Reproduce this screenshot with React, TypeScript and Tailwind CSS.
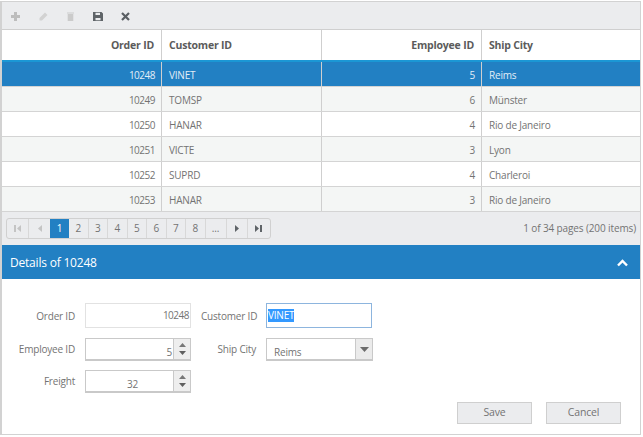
const rows = [
  ["10248", "VINET", "5", "Reims"],
  ["10249", "TOMSP", "6", "Münster"],
  ["10250", "HANAR", "4", "Rio de Janeiro"],
  ["10251", "VICTE", "3", "Lyon"],
  ["10252", "SUPRD", "4", "Charleroi"],
  ["10253", "HANAR", "3", "Rio de Janeiro"],
];

function Spinner() {
  return (
    <div className="w-[17px] shrink-0 bg-[#eeeeee] border-l border-[#c9c9c9] flex flex-col items-center justify-between pt-[4px] pb-[4px]">
      <svg width="7" height="4" viewBox="0 0 7 4"><path d="M3.5 0L7 4H0z" fill="#777777" /></svg>
      <svg width="7" height="4" viewBox="0 0 7 4"><path d="M3.5 4L7 0H0z" fill="#5f5f5f" /></svg>
    </div>
  );
}

const First = ({ c }: { c: string }) => (
  <svg width="7" height="7" viewBox="0 0 7 7"><path d="M0 0h2v7H0zM7 0v7L3 3.5z" fill={c} /></svg>
);
const Last = ({ c }: { c: string }) => (
  <svg width="7" height="7" viewBox="0 0 7 7"><path d="M7 0H5v7h2zM0 0v7l4-3.5z" fill={c} /></svg>
);
const Prev = ({ c }: { c: string }) => (
  <svg width="4" height="7" viewBox="0 0 4 7"><path d="M4 0v7L0 3.5z" fill={c} /></svg>
);
const Next = ({ c }: { c: string }) => (
  <svg width="4" height="7" viewBox="0 0 4 7"><path d="M0 0v7l4-3.5z" fill={c} /></svg>
);

function ToolIcon({ children }: { children: React.ReactNode }) {
  return <div className="w-[27.5px] h-[10px] flex items-center justify-center">{children}</div>;
}

export default function App() {
  return (
    <div className="w-[643px] h-[437px] bg-white pt-px text-[10px] text-[#737373] tracking-[-0.2px]" style={{ fontFamily: '"Open Sans", "Noto Sans", sans-serif' }}>
      <div className="w-[641px] h-[434px] border border-[#d2d2d2] border-l-2 flex flex-col overflow-hidden">
        <div className="h-[28px] shrink-0 bg-[#ebecee] border-b border-[#cfcfcf] flex items-center pt-[2px]">
          <ToolIcon>
            <svg width="9" height="9" viewBox="0 0 9 9"><path d="M3 0h3v3h3v3H6v3H3V6H0V3h3z" fill="#bdbdbd" /></svg>
          </ToolIcon>
          <ToolIcon>
            <svg width="9" height="9" viewBox="0 0 9 9"><path d="M6 0.5l2.5 2.5L3 8.5H0.5V6z" fill="#d2d2d2" /></svg>
          </ToolIcon>
          <ToolIcon>
            <svg width="7" height="9" viewBox="0 0 7 9"><path d="M0 0.5h7v1H0zM0.7 2h5.6v7H0.7z" fill="#cbcbcb" /></svg>
          </ToolIcon>
          <ToolIcon>
            <svg width="10" height="9" viewBox="0 0 10 9"><path d="M0 0h8.5L10 1.5V9H0zM2.5 0.8v2.2h4.5V0.8zM2.5 6v2.2h5V6z" fill="#5f6468" fillRule="evenodd" /></svg>
          </ToolIcon>
          <ToolIcon>
            <svg width="9" height="9" viewBox="0 0 9 9"><path d="M1 1l7 7M8 1L1 8" stroke="#5a5f63" strokeWidth="2.2" /></svg>
          </ToolIcon>
        </div>
        <div className="h-[30px] shrink-0 grid grid-cols-[160px_160px_160px_1fr] font-bold text-[#5b5b5b] text-[10.5px]">
          <div className="flex items-center justify-end pt-px pr-[7px] border-r border-[#cfcfcf]">Order ID</div>
          <div className="flex items-center pt-px pl-[7px] border-r border-[#cfcfcf]">Customer ID</div>
          <div className="flex items-center justify-end pt-px pr-[7px] border-r border-[#cfcfcf]">Employee ID</div>
          <div className="flex items-center pt-px pl-[7px]">Ship City</div>
        </div>
        {rows.map((r, i) => (
          <div
            key={r[0]}
            className={
              "shrink-0 grid grid-cols-[160px_160px_160px_1fr] border-b border-[#d4d4d4] " +
              (i === 0
                ? "h-[27px] bg-[#2280c3] text-[#e3eef7] border-t-2 border-t-[#1b97d5]"
                : i % 2 === 1
                ? "h-[25px] bg-[#f4f6f5]"
                : "h-[25px] bg-white")
            }
          >
            <div className="flex items-center justify-end pt-[2px] pr-[6px] border-r border-[#cfcfcf] tracking-[-0.5px]">{r[0]}</div>
            <div className="flex items-center pt-[2px] pl-[7px] border-r border-[#cfcfcf]">{r[1]}</div>
            <div className="flex items-center justify-end pt-[2px] pr-[6px] border-r border-[#cfcfcf]">{r[2]}</div>
            <div className="flex items-center pt-[2px] pl-[7px]">{r[3]}</div>
          </div>
        ))}
        <div className="h-[33px] shrink-0 bg-[#ebecee] flex items-center justify-between pl-[4px] pr-[4px]">
          <div className="flex h-[21px] border border-[#d0d0d0] rounded-[3px] items-stretch overflow-hidden">
            <div className="w-[22px] flex items-center justify-center border-r border-[#d8d8d8]"><First c="#c4c4c4" /></div>
            <div className="w-[21px] flex items-center justify-center"><Prev c="#c4c4c4" /></div>
            <div className="w-[19px] flex items-center justify-center bg-[#2280c3] text-white">1</div>
            {["2", "3", "4", "5", "6", "7", "8", "..."].map((p) => (
              <div key={p} className={"flex items-center justify-center border-r border-[#d8d8d8] " + (p === "..." ? "w-[21px]" : "w-[19.5px]")}>{p}</div>
            ))}
            <div className="w-[21px] flex items-center justify-center border-r border-[#d8d8d8]"><Next c="#5f6468" /></div>
            <div className="w-[22px] flex items-center justify-center"><Last c="#5f6468" /></div>
          </div>
          <div className="tracking-[-0.12px]">1 of 34 pages (200 items)</div>
        </div>
        <div className="h-[34px] shrink-0 bg-[#2280c3] text-white text-[12px] flex items-center justify-between pt-px pl-[8px] pr-[12px]">
          <span>Details of 10248</span>
          <svg width="11" height="8" viewBox="0 0 11 8"><path d="M1 6.5l4.5-4.5L10 6.5" fill="none" stroke="#ffffff" strokeWidth="2.4" /></svg>
        </div>
        <div className="flex-1 flex flex-col pt-[24px]">
          <div className="grid grid-cols-[73px_106px_55px_106px] gap-x-[10px] gap-y-[9px] auto-rows-min items-center whitespace-nowrap">
            <div className="text-right">Order ID</div>
            <div className="h-[25px] mb-px border border-[#e2e2e2] flex items-center justify-end pr-[1px] tracking-[-0.5px]">10248</div>
            <div className="text-right">Customer ID</div>
            <div className="h-[25px] mb-px border border-[#8db5de] flex items-center pl-[1px]">
              <span className="bg-[#3399ff] text-white leading-[13px]">VINET</span>
            </div>
            <div className="text-right">Employee ID</div>
            <div className="h-[23px] border border-[#c9c9c9] border-b-2 flex">
              <div className="flex-1 flex items-end justify-end pr-[1px] leading-[13px]">5</div>
              <Spinner />
            </div>
            <div className="text-right">Ship City</div>
            <div className="h-[23px] w-[107px] border border-[#c9c9c9] border-b-2 flex">
              <div className="flex-1 flex items-end pl-[7px] leading-[13px]">Reims</div>
              <div className="w-[17px] bg-[#ebebeb] border-l border-[#c9c9c9] flex items-center justify-center">
                <svg width="9" height="5" viewBox="0 0 9 5"><path d="M0 0h9L4.5 5z" fill="#6b6b6b" /></svg>
              </div>
            </div>
            <div className="text-right">Freight</div>
            <div className="h-[23px] border border-[#c9c9c9] border-b-2 flex">
              <div className="flex-1 flex items-end justify-center pl-[6px] leading-[13px]">32</div>
              <Spinner />
            </div>
          </div>
          <div className="flex justify-end gap-[14px] pr-[19px] mt-[9px] text-[10.5px]">
            <div className="w-[75px] h-[22px] bg-[#ebecee] border border-[#cfcfcf] flex items-center justify-center">Save</div>
            <div className="w-[75px] h-[22px] bg-[#ebecee] border border-[#cfcfcf] flex items-center justify-center">Cancel</div>
          </div>
        </div>
      </div>
    </div>
  );
}
